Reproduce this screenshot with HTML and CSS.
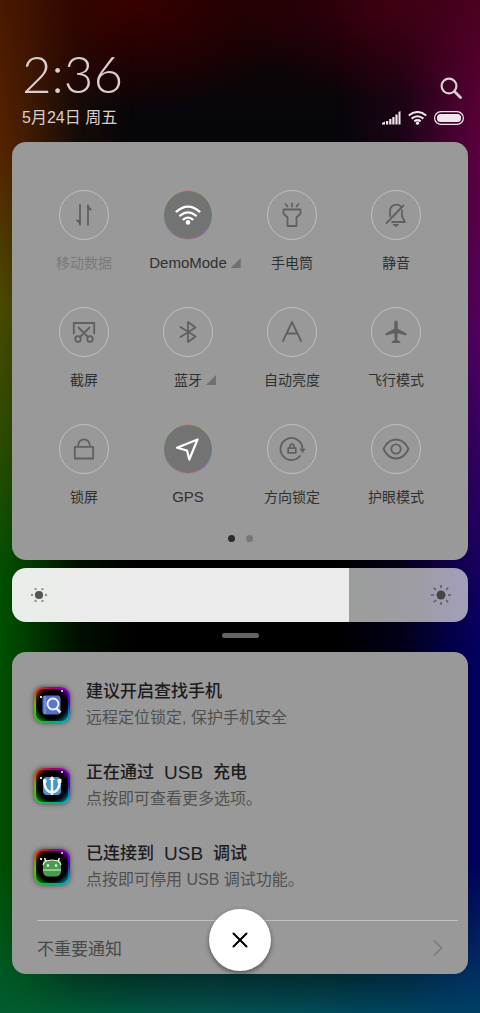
FILE: index.html
```html
<!DOCTYPE html>
<html lang="zh-CN">
<head>
<meta charset="utf-8">
<meta name="viewport" content="width=device-width, initial-scale=1">
<title>控制中心</title>
<link rel="stylesheet" href="styles.css">
</head>
<body>
<div class="shade">
  <header class="header">
    <div class="when">
      <time class="clock">2:36</time>
      <span class="date">5月24日 周五</span>
    </div>
    <div class="status">
      <button class="search" aria-label="搜索">
        <svg width="22" height="22" viewBox="0 0 22 22" fill="none" stroke="currentColor" stroke-width="2.2" stroke-linecap="round"><circle cx="9" cy="9" r="7.4"/><path d="M14.5 14.5l6 6" stroke-width="2.8"/></svg>
      </button>
      <div class="indicators">
        <svg width="19" height="14" viewBox="0 0 19 14" fill="currentColor"><path d="M0 13.500v-1.500l3-1.500v3zM4 10h2.200v3.500H4zM7.200 8h2.200v5.500H7.200zM10.300 6h2.200v7.500h-2.200zM13.400 3.500h2.200v10h-2.200zM16.500 1l2-1v13.500h-2z"/></svg>
        <svg width="19" height="14" viewBox="0 0 19 14" fill="none" stroke="currentColor" stroke-width="2"><path d="M.8 4.600Q9.500-2.600 18.200 4.600M3.600 7.600q5.900-4.800 11.800 0M6.300 10.400q3.200-2.500 6.400 0"/><circle cx="9.500" cy="12.200" r="1.600" fill="currentColor" stroke="none"/></svg>
        <svg width="30" height="14" viewBox="0 0 30 14"><rect x=".6" y=".6" width="28.800" height="12.800" rx="6.400" fill="none" stroke="currentColor" stroke-width="1.200"/><rect x="3" y="3" width="24" height="8" rx="3.500" fill="currentColor"/></svg>
      </div>
    </div>
  </header>

  <main class="content">
    <section class="panel toggles">
      <div class="grid">
        <button class="tile disabled"><span class="disc"><svg class="ico" viewBox="0 0 28 28"><path d="M10 4v19.500M18 24V4.500"/><path d="M10 23.500l-4-4.500h4zM18 4.500l4 4.500h-4z" fill="currentColor" stroke-width=".5"/></svg></span><span class="label">移动数据</span></button>
        <button class="tile active"><span class="disc"><svg class="ico" viewBox="0 0 28 28"><path d="M2.500 10.600Q14 .600 25.500 10.600M6 14.600q8-6.400 16 0M9.500 18.400q4.500-3.400 9 0"/><circle cx="14" cy="21.400" r="2.300" fill="currentColor" stroke="none"/></svg></span><span class="label">DemoMode<i class="corner"></i></span></button>
        <button class="tile"><span class="disc"><svg class="ico" viewBox="0 0 28 28"><path d="M5.500 8.500h17v4l-4 4v8.500h-9v-8.500l-4-4zM14 2.500v3M7.500 3l2 2.500M20.500 3l-2 2.500"/></svg></span><span class="label">手电筒</span></button>
        <button class="tile"><span class="disc"><svg class="ico" viewBox="0 0 28 28"><path d="M4.500 22L21.500 4.500M8 15v-4.500c0-8 9-8.500 11.500-4M20 9.500v6l3 5.500H10"/><path d="M11.500 23.500h5l-1.500 1.500h-2z" fill="currentColor" stroke-width="1"/></svg></span><span class="label">静音</span></button>

        <button class="tile"><span class="disc"><svg class="ico" viewBox="0 0 28 28"><path d="M3.800 15.500V5h20.400v10.500M8.500 9.500L18 19M19.500 9.500L10 19"/><circle cx="8" cy="21" r="2.800"/><circle cx="20" cy="21" r="2.800"/></svg></span><span class="label">截屏</span></button>
        <button class="tile"><span class="disc"><svg class="ico" viewBox="0 0 28 28"><path d="M6.500 9L21.500 18.500 14 24V4l7.500 5.500L6.500 19"/></svg></span><span class="label">蓝牙<i class="corner"></i></span></button>
        <button class="tile"><span class="disc"><svg class="ico" viewBox="0 0 28 28"><path d="M5 23L14 4l9 19M9.500 15.500h9"/></svg></span><span class="label">自动亮度</span></button>
        <button class="tile"><span class="disc"><svg class="ico" viewBox="0 0 28 28"><path d="M14 2.500c1 0 1.700.8 1.700 2v6.200l8.800 4.700v2l-8.800-2.200-.4 6.800 3 1.500v1.500H9.700v-1.500l3-1.500-.4-6.800-8.800 2.200v-2l8.800-4.700V4.500c0-1.200.7-2 1.700-2z" fill="currentColor" stroke="none"/></svg></span><span class="label">飞行模式</span></button>

        <button class="tile"><span class="disc"><svg class="ico" viewBox="0 0 28 28"><path d="M4.800 11.800h18.400v11.700H4.800zM8 11.800c0-10 12-10 12 0"/></svg></span><span class="label">锁屏</span></button>
        <button class="tile active"><span class="disc"><svg class="ico" viewBox="0 0 28 28"><path d="M3 12.700L23.500 4.500 15.300 24.500 13 15.500z"/></svg></span><span class="label">GPS</span></button>
        <button class="tile"><span class="disc"><svg class="ico" viewBox="0 0 28 28"><path d="M22 21A11 11 0 1 1 24.500 13.500M10.200 13.200h7.600v4.600h-7.600zM11.700 13.200c0-5.500 4.600-5.500 4.600 0"/><path d="M22.300 14h4.800l-2.400 3.600z" fill="currentColor" stroke-width=".6"/></svg></span><span class="label">方向锁定</span></button>
        <button class="tile"><span class="disc"><svg class="ico" viewBox="0 0 28 28"><path d="M1.500 14Q6 4.500 14 4.500T26.500 14Q22 23.500 14 23.500T1.500 14z"/><circle cx="14" cy="14" r="4.700"/></svg></span><span class="label">护眼模式</span></button>
      </div>
      <div class="pages"><span class="dot current"></span><span class="dot"></span></div>
    </section>

    <div class="brightness">
      <input class="slider" type="range" min="0" max="100" value="74" aria-label="亮度">
      <svg class="sun low" width="20" height="20" viewBox="-10 -10 20 20" fill="currentColor"><circle r="4.100"/><g opacity=".6"><circle cx="7" r="1.200"/><circle cx="-7" r="1.200"/><circle cx="3.400" cy="5.900" r="1.200"/><circle cx="-3.400" cy="5.900" r="1.200"/><circle cx="3.400" cy="-5.900" r="1.200"/><circle cx="-3.400" cy="-5.900" r="1.200"/></g></svg>
      <svg class="sun high" width="22" height="22" viewBox="-11 -11 22 22" fill="currentColor" stroke="currentColor"><circle r="4.500" stroke="none"/><path d="M7 0h3M-7 0h-3M0 7v3M0-7v-3M5 5l2.200 2.200M-5 5l-2.200 2.200M5-5l2.200-2.200M-5-5l-2.200-2.200" stroke-width="1.500" opacity=".75"/></svg>
    </div>

    <div class="handle"></div>

    <section class="panel notices">
      <article class="notice">
        <span class="app"><svg width="20" height="20" viewBox="0 0 20 20"><rect x=".5" y=".5" width="18" height="19" rx="3" fill="#5771c5"/><path d="M3 1v18" stroke="#93a8e4"/><circle cx="11" cy="9" r="5.500" fill="#5b75d0" stroke="#f3f3fa" stroke-width="1.900"/><path d="M14.500 13.500l4 4" stroke="#f3f3fa" stroke-width="2.400"/></svg></span>
        <div class="copy"><h2 class="title">建议开启查找手机</h2><p class="text">远程定位锁定, 保护手机安全</p></div>
      </article>
      <article class="notice">
        <span class="app"><svg width="20" height="20" viewBox="0 0 20 20"><rect x="1" y="1" width="18" height="18" rx="4" fill="#4796c4"/><g fill="none" stroke="#f5f5f5" stroke-width="2.400"><path d="M10 1v18M2.500 5C1.500 20 18.500 20 17.500 5"/></g><g fill="#f5f5f5"><path d="M7 4l3-4 3 4z"/><circle cx="2.800" cy="5" r="2"/><rect x="15.500" y="3" width="4" height="4"/></g></svg></span>
        <div class="copy"><h2 class="title">正在通过 <span class="usb">USB</span> 充电</h2><p class="text">点按即可查看更多选项。</p></div>
      </article>
      <article class="notice">
        <span class="app"><svg width="20" height="20" viewBox="0 0 20 20"><path d="M1 11V6Q1 3 4 3h12q3 0 3 3v8q0 5-5 5.500H6Q1 19 1 14z" fill="#4a9b4b"/><path d="M4 4L2.500 1M16 4l1.500-3" stroke="#eee" stroke-width="1.600"/><path d="M1 8q1-3.500 5-4.500 4-1 8 0 4 1 5 4.500M1 13h18" fill="none" stroke="#e4eee3" stroke-width="1.200"/><circle cx="6" cy="8.500" r="1.200" fill="#fff"/><circle cx="14" cy="8.500" r="1.200" fill="#fff"/></svg></span>
        <div class="copy"><h2 class="title">已连接到 <span class="usb">USB</span> 调试</h2><p class="text">点按即可停用 USB 调试功能。</p></div>
      </article>
      <a class="more" href="#"><span>不重要通知</span><svg width="10" height="18" viewBox="0 0 10 18" fill="none" stroke="#7a7a7a" stroke-width="1.500"><path d="M1 1.500L8.500 9 1 16.500"/></svg></a>
      <button class="close" aria-label="清除全部"><svg width="16" height="16" viewBox="0 0 16 16" stroke="#000" stroke-width="2" stroke-linecap="round"><path d="M1.500 1.500l13 13M14.500 1.500l-13 13"/></svg></button>
    </section>
  </main>
</div>
</body>
</html>
```
FILE: styles.css
```css
* {
  box-sizing: border-box;
}

body {
  margin: 0;
  background: #000;
  font-family: "Liberation Sans", "Noto Sans CJK SC", sans-serif;
  color: #303030;
}

button {
  padding: 0;
  border: 0;
  background: none;
  color: inherit;
  font: inherit;
}

svg {
  display: block;
  flex: none;
}

.shade {
  position: relative;
  isolation: isolate;
  overflow: hidden;
  min-height: 100vh;
  padding-bottom: 39px;
  background:
    linear-gradient(#000, #0008 40%, transparent) bottom / 100% 80px no-repeat,
    linear-gradient(90deg, #005c2e, #04504e 45%, #004064) bottom / 100% 80px no-repeat,
    radial-gradient(ellipse 38% 110px at 28% 0, #380000, transparent),
    radial-gradient(ellipse 35% 100px at 82% 0, #3c0010, transparent),
    linear-gradient(#140002, #06060a 120px, #000 500px);
}

/* Coloured glow along the screen edges */
.shade::before,
.shade::after {
  content: "";
  position: absolute;
  z-index: -1;
  inset: 0;
}

.shade::before {
  background: linear-gradient(#4a1800, #552400 15%, #4a4a00 30%, #304c00 42%, #005000 57%, #005000 85%, #005c30);
  mask-image: linear-gradient(90deg, #000, #000c 5%, #0003 16%, transparent 28%);
}

.shade::after {
  background: linear-gradient(#4c0020, #5c0040 15%, #500060 34%, #200060 52%, #000060 65%, #00005c 85%, #004064);
  mask-image: linear-gradient(270deg, #000, #000c 5%, #0004 16%, transparent 30%);
}

.header {
  display: flex;
  justify-content: space-between;
  height: 142px;
  padding: 44px 16px 0 22px;
  color: #d8cfcf;
}

.when {
  display: flex;
  flex-direction: column;
}

.clock {
  font: 300 51px/60px Lato, sans-serif;
}

.date {
  font-size: 16px;
  line-height: 28px;
}

.status {
  display: flex;
  flex-direction: column;
  align-items: flex-end;
  gap: 12px;
  padding-top: 33px;
}

.search {
  margin-right: 2px;
}

.indicators {
  display: flex;
  gap: 7px;
  color: #eee6ea;
}

.content {
  display: flex;
  flex-direction: column;
  padding: 0 12px;
}

.panel {
  border-radius: 14px;
  background: #999;
}

.toggles {
  padding: 48px 20px 18px;
}

.grid {
  display: grid;
  grid-template-columns: repeat(4, 1fr);
  row-gap: 33px;
}

.tile {
  display: flex;
  flex-direction: column;
  align-items: center;
  gap: 12px;
}

.disc {
  display: grid;
  place-items: center;
  width: 50px;
  height: 50px;
  border: 1px solid #c0c0c0;
  border-radius: 50%;
  color: #606060;
}

.ico {
  width: 28px;
  height: 28px;
  fill: none;
  stroke: currentColor;
  stroke-width: 1.8;
  stroke-linejoin: round;
  stroke-linecap: round;
}

.active .disc {
  border-color: transparent;
  background:
    linear-gradient(#737373, #737373) padding-box,
    conic-gradient(#c08080, #9cac80 15%, #80a8a8 27%, #9484b8 37%, #c47c8c 50%, #9484b8 65%, #80ac90 78%, #a8a880 90%, #c08080) border-box;
  color: #fff;
}

.active .ico {
  stroke-width: 2.2;
}

.label {
  display: flex;
  align-items: center;
  gap: 4px;
  font-size: 14px;
  line-height: 22px;
  white-space: nowrap;
}

.active .label {
  font-size: 15px;
}

.disabled .label {
  color: #7a7a7a;
}

/* Hangs beside the label, which stays centred under its disc */
.corner {
  width: 10px;
  height: 10px;
  margin-right: -14px;
  background: #707070;
  clip-path: polygon(100% 0, 100% 100%, 0 100%);
}

.pages {
  display: flex;
  justify-content: center;
  gap: 11px;
  padding-top: 27px;
}

.dot {
  width: 7px;
  height: 7px;
  border-radius: 50%;
  background: #777;
}

.dot.current {
  background: #2b2b2b;
}

.brightness {
  position: relative;
  display: grid;
  margin-top: 8px;
}

.slider {
  appearance: none;
  width: 100%;
  height: 54px;
  margin: 0;
  border-radius: 14px;
  background:
    linear-gradient(90deg, #e9eee9, #ebebeb 20%) left / 74% 100% no-repeat,
    linear-gradient(90deg, #9b9d9b 74%, #9f9ca4 88%, #a29fbb);
}

.slider::-webkit-slider-thumb {
  appearance: none;
  width: 1px;
  height: 54px;
}

.sun {
  position: absolute;
  top: 50%;
  transform: translateY(-50%);
  pointer-events: none;
}

.low {
  left: 17px;
  color: #555;
}

.high {
  right: 16px;
  color: #444;
}

.handle {
  align-self: center;
  width: 37px;
  height: 5px;
  margin: 11px 0 14px;
  border-radius: 3px;
  background: #646464;
}

.notices {
  position: relative;
  padding: 0 10px 0 22px;
}

.notice {
  display: flex;
  align-items: center;
  gap: 16px;
  height: 81px;
  padding-top: 24px;
}

.app {
  display: grid;
  flex: none;
  place-items: center;
  width: 36px;
  height: 36px;
  border: 2px solid transparent;
  border-radius: 9px;
  background:
    radial-gradient(circle at 5px 8px, #ddd 1px, transparent 1px) padding-box,
    radial-gradient(circle at 26px 2px, #bbb 1px, transparent 1px) padding-box,
    radial-gradient(circle, #000 62%, #0009 78%, #0003) padding-box,
    conic-gradient(#a00060, #9000d0 12%, #3010c0 24%, #00a8d0 36%, #00b070 50%, #20c020 62%, #80b000 75%, #d04010 87%, #a00060) border-box;
  box-shadow: 0 0 5px #444;
}

.title {
  display: flex;
  align-items: center;
  gap: 10px;
  margin: 0;
  color: #1c1c1c;
  font-size: 17px;
  font-weight: 500;
  line-height: 26px;
}

.usb {
  font-size: 19px;
  font-weight: 400;
}

.text {
  margin: 0;
  color: #505050;
  font-size: 16px;
  line-height: 26px;
}

.more {
  display: flex;
  align-items: center;
  justify-content: space-between;
  height: 54px;
  margin: 25px 0 0 3px;
  padding-right: 15px;
  border-top: 1px solid #c0c0c0;
  color: #484848;
  font-size: 17px;
  text-decoration: none;
}

.close {
  position: absolute;
  bottom: 3px;
  left: calc(50% - 31px);
  display: grid;
  place-items: center;
  width: 62px;
  height: 62px;
  border-radius: 50%;
  background: #fff;
  box-shadow: 0 2px 5px #0007;
}
```
